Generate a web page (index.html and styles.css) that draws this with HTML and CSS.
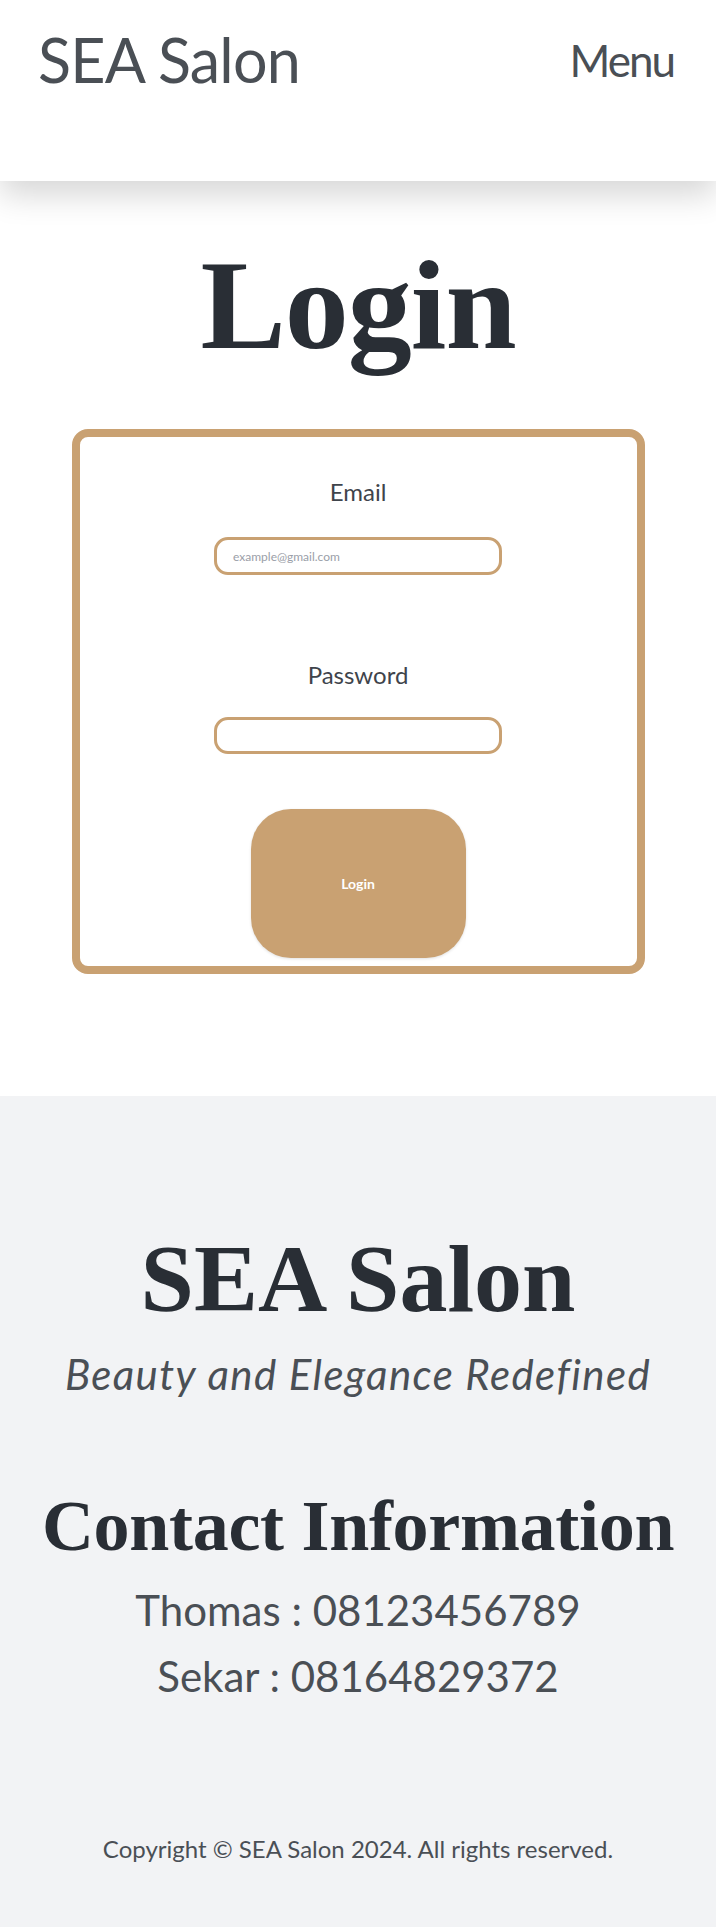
FILE: index.html
```html
<!DOCTYPE html>
<html lang="en">
<head>
<meta charset="utf-8">
<title>SEA Salon - Login</title>
<link rel="stylesheet" href="styles.css">
</head>
<body>
<header class="site-header">
  <a class="brand" href="#">SEA Salon</a>
  <button class="menu-btn" type="button">Menu</button>
</header>
<main class="main">
  <h1 class="page-title">Login</h1>
  <form class="login-card">
    <label class="field-label field-label--email" for="email">Email</label>
    <input class="field-input field-input--email" id="email" type="email" placeholder="example@gmail.com">
    <label class="field-label field-label--password" for="password">Password</label>
    <input class="field-input field-input--password" id="password" type="password">
    <button class="login-btn" type="submit">Login</button>
  </form>
</main>
<footer class="site-footer">
  <h2 class="footer-brand">SEA Salon</h2>
  <p class="tagline">Beauty and Elegance Redefined</p>
  <h3 class="contact-title">Contact Information</h3>
  <p class="contact-line">Thomas : 08123456789</p>
  <p class="contact-line">Sekar : 08164829372</p>
  <p class="copyright">Copyright © SEA Salon 2024. All rights reserved.</p>
</footer>
</body>
</html>
```
FILE: styles.css
```css
* { box-sizing: border-box; }
html, body { margin: 0; padding: 0; }
body {
  background: #ffffff;
  font-family: Lato, "Open Sans", sans-serif;
  color: #4a4f55;
}

.site-header {
  position: relative;
  z-index: 2;
  height: 181px;
  padding: 29px 42px 0 38px;
  display: flex;
  justify-content: space-between;
  align-items: flex-start;
  background: #ffffff;
  box-shadow: 0 14px 30px rgba(0, 0, 0, 0.16);
}
.brand {
  font-size: 61px;
  line-height: 61px;
  letter-spacing: -0.8px;
  color: #4a4f55;
  text-decoration: none;
  font-weight: 400;
}
.menu-btn {
  margin-top: 9px;
  padding: 0;
  border: 0;
  background: none;
  font-family: Lato, "Open Sans", sans-serif;
  font-size: 44px;
  line-height: 44px;
  letter-spacing: -2px;
  color: #4a4f55;
}

.main {
  padding: 60px 0 122px;
  display: flex;
  flex-direction: column;
  align-items: center;
}
.page-title {
  margin: 0 0 60px;
  font-family: "Liberation Serif", serif;
  font-weight: 700;
  font-size: 128px;
  line-height: 128px;
  letter-spacing: -1px;
  color: #292e35;
}
.login-card {
  width: 573px;
  height: 545px;
  border: 8px solid #c9a172;
  border-radius: 16px;
  padding: 43px 0 0;
  display: flex;
  flex-direction: column;
  align-items: center;
}
.field-label {
  font-size: 24px;
  line-height: 24px;
  color: #3f444b;
}
.field-input {
  width: 288px;
  height: 38px;
  border: 3px solid #c9a172;
  border-radius: 14px;
  padding: 0 16px;
  font-family: Lato, sans-serif;
  font-size: 12px;
  color: #4a4f55;
  background: #fff;
  outline: none;
}
.field-input::placeholder { color: #9a9ea8; }
.field-input--email { margin-top: 33px; }
.field-label--password { margin-top: 88px; }
.field-input--password { margin-top: 30px; height: 37px; }
.login-btn {
  margin-top: 55px;
  width: 215px;
  height: 149px;
  border: 0;
  border-radius: 40px;
  background: #c9a172;
  color: #ffffff;
  font-family: Lato, sans-serif;
  font-weight: 700;
  font-size: 14px;
  box-shadow: 0 1px 3px rgba(0, 0, 0, 0.12);
}

.site-footer {
  background: #f2f3f5;
  padding: 135px 16px 66px;
  text-align: center;
}
.footer-brand {
  margin: 0;
  font-family: "Liberation Serif", serif;
  font-weight: 700;
  font-size: 96px;
  line-height: 96px;
  color: #292e35;
}
.tagline {
  margin: 26px 0 0;
  font-style: italic;
  font-size: 42px;
  line-height: 42px;
  letter-spacing: 1.4px;
  color: #4a4f55;
}
.contact-title {
  margin: 95px 0 0;
  font-family: "Liberation Serif", serif;
  font-weight: 700;
  font-size: 72px;
  line-height: 72px;
  letter-spacing: -0.3px;
  color: #292e35;
}
.contact-line {
  margin: 0;
  font-size: 42px;
  line-height: 66px;
  color: #4a4f55;
}
.contact-title + .contact-line { margin-top: 15px; }
.copyright {
  margin: 128px 0 0;
  font-size: 24px;
  line-height: 24px;
  color: #4a4f55;
}
```
